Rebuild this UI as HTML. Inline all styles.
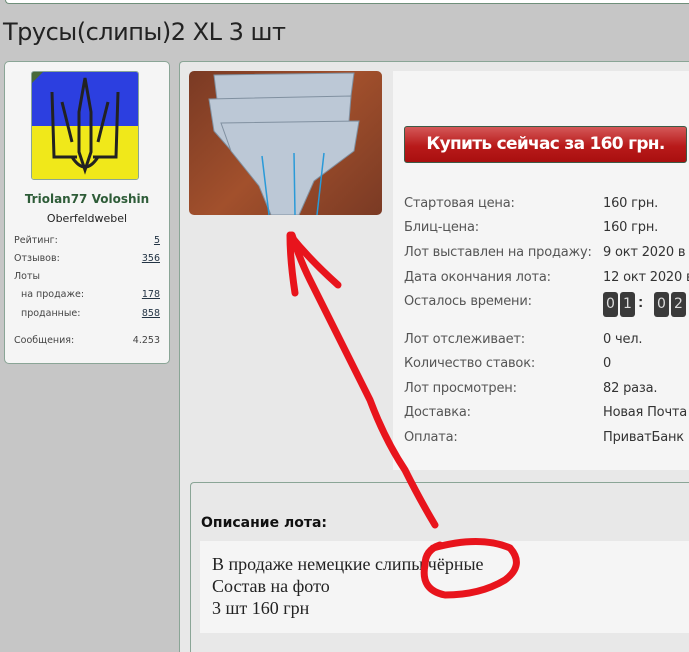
<!DOCTYPE html>
<html><head><meta charset="utf-8"><style>
html,body{margin:0;width:689px;height:652px;overflow:hidden}
body{background:#c6c6c6;font-family:"DejaVu Sans",sans-serif;position:relative}
.abs{position:absolute}
.topbar{left:5px;top:0;width:684px;height:3px;background:#fff;border:1px solid #6f8f7a;border-top:none;border-right:none;border-radius:0 0 0 4px}
h1{position:absolute;left:3px;top:18px;margin:0;font:400 24px "DejaVu Sans",sans-serif;color:#222;letter-spacing:-0.5px}
.user{left:4px;top:61px;width:164px;height:301px;background:#f5f5f5;border:1px solid #8aa596;border-radius:5px}
.main{left:179px;top:61px;width:510px;height:591px;background:#e8e8e8;border-left:1px solid #8aa596;border-top:1px solid #8aa596;border-radius:4px 0 0 0;box-sizing:border-box}
.st{font-size:9.5px;color:#444}
.st a{color:#234;text-decoration:underline}
.info{left:393px;top:71px;width:296px;height:399px;background:#f5f5f5}
.row{position:absolute;left:404px;font-size:13px;color:#555;letter-spacing:-0.2px}
.val{position:absolute;left:603px;font-size:13px;color:#333;white-space:nowrap;letter-spacing:-0.2px}
.btn{left:404px;top:126px;width:281px;height:35px;border:1px solid #3c5a46;border-radius:3px;background:linear-gradient(#d45858,#b81a1a 55%,#a90f0f);color:#fff;font:bold 17px "DejaVu Sans",sans-serif;text-align:center;line-height:35px;letter-spacing:-0.7px}
.dig{position:absolute;top:292px;width:15px;height:25px;background:#3a3a3a;border-radius:3px;color:#ddd;font-size:14px;text-align:center;line-height:25px}
.desc{left:190px;top:482px;width:499px;height:170px;border-left:1px solid #8aa596;border-top:1px solid #8aa596;border-radius:4px 0 0 0;background:#e8e8e8;box-sizing:border-box}
.dbox{left:200px;top:541px;width:489px;height:92px;background:#f5f5f5}
.dtext{left:212px;top:553px;font:18px/22px "Liberation Serif",serif;color:#222;white-space:nowrap}
</style></head><body>
<div class="abs topbar"></div>
<h1>Трусы(слипы)2 XL 3 шт</h1>
<div class="abs user">
 <div class="abs" style="left:26px;top:9px;width:106px;height:107px;border:1px solid #8aa596;border-radius:3px;overflow:hidden">
  <div style="height:54px;background:#2c3fe0"></div><div style="height:53px;background:#f0e81a"></div>
  <svg class="abs" style="left:0;top:0" width="106" height="107" viewBox="0 0 106 107"><g fill="none" stroke="#222" stroke-width="3"><path d="M53 6 L47 40 L47 80 L53 98 L59 80 L59 40Z"/><path d="M20 20 L22 85 L45 85 M86 20 L84 85 L61 85"/><path d="M30 30 L40 70 M76 30 L66 70"/><path d="M40 85 Q53 105 66 85"/></g></svg>
  <div class="abs" style="left:0;top:0;width:0;height:0;border-top:11px solid #4a6a3a;border-right:11px solid transparent"></div>
 </div>
 <div class="abs" style="left:0;width:164px;top:130px;text-align:center;font:bold 12px 'DejaVu Sans',sans-serif;color:#2e5c38">Triolan77 Voloshin</div>
 <div class="abs" style="left:0;width:164px;top:150px;text-align:center;font-size:11px;color:#222">Oberfeldwebel</div>
 <div class="abs st" style="left:9px;top:173px">Рейтинг:</div><div class="abs st" style="right:9px;top:173px"><a>5</a></div>
 <div class="abs st" style="left:9px;top:191px">Отзывов:</div><div class="abs st" style="right:9px;top:191px"><a>356</a></div>
 <div class="abs st" style="left:9px;top:209px">Лоты</div>
 <div class="abs st" style="left:16px;top:227px">на продаже:</div><div class="abs st" style="right:9px;top:227px"><a>178</a></div>
 <div class="abs st" style="left:16px;top:246px">проданные:</div><div class="abs st" style="right:9px;top:246px"><a>858</a></div>
 <div class="abs st" style="left:9px;top:273px">Сообщения:</div><div class="abs st" style="right:9px;top:273px">4.253</div>
</div>
<div class="abs main"></div>
<div class="abs" style="left:189px;top:71px;width:193px;height:144px;border-radius:5px;overflow:hidden;background:linear-gradient(135deg,#7a3a24,#a2502c 50%,#7a3a24)">
 <svg width="193" height="144"><g fill="#bcc8d6" stroke="#8090a0"><path d="M25 4 L165 2 L160 40 L30 45Z"/><path d="M20 28 L162 25 L158 75 L130 100 L60 100 L25 60Z"/><path d="M32 52 L170 50 L165 80 L125 110 L110 144 L82 144 L70 115 L42 80Z"/></g><g stroke="#2a9ad8" stroke-width="1.5" fill="none"><path d="M73 85 L80 144 M105 82 L106 144 M135 82 L128 144"/></g></svg>
</div>
<div class="abs info"></div>
<div class="abs btn">Купить сейчас за 160 грн.</div>
<div class="row" style="top:196px">Стартовая цена:</div><div class="val" style="top:196px">160 грн.</div>
<div class="row" style="top:220px">Блиц-цена:</div><div class="val" style="top:220px">160 грн.</div>
<div class="row" style="top:245px">Лот выставлен на продажу:</div><div class="val" style="top:245px">9 окт 2020 в</div>
<div class="row" style="top:270px">Дата окончания лота:</div><div class="val" style="top:270px">12 окт 2020 в</div>
<div class="row" style="top:294px">Осталось времени:</div>
<div class="dig" style="left:603px">0</div><div class="dig" style="left:620px">1</div>
<div class="abs" style="left:638px;top:294px;font:bold 16px sans-serif;color:#333">:</div>
<div class="dig" style="left:654px">0</div><div class="dig" style="left:671px">2</div>
<div class="row" style="top:332px">Лот отслеживает:</div><div class="val" style="top:332px">0 чел.</div>
<div class="row" style="top:356px">Количество ставок:</div><div class="val" style="top:356px">0</div>
<div class="row" style="top:381px">Лот просмотрен:</div><div class="val" style="top:381px">82 раза.</div>
<div class="row" style="top:405px">Доставка:</div><div class="val" style="top:405px">Новая Почта</div>
<div class="row" style="top:430px">Оплата:</div><div class="val" style="top:430px">ПриватБанк</div>
<div class="abs desc"></div>
<div class="abs" style="left:201px;top:515px;font:bold 14px 'DejaVu Sans',sans-serif;color:#111">Описание лота:</div>
<div class="abs dbox"></div>
<div class="abs dtext">В продаже немецкие слипы чёрные<br>Состав на фото<br>3 шт 160 грн</div>
<svg class="abs" style="left:0;top:0" width="689" height="652"><g fill="none" stroke="#e8141c" stroke-width="7" stroke-linecap="round" stroke-linejoin="round">
<path d="M435 525 Q420 500 405 470 Q385 440 370 400 Q350 360 335 330 Q320 300 310 280 Q300 260 292 235"/>
<path d="M295 293 Q290 260 290 235 Q310 260 338 285"/>
<path d="M433 548 Q480 535 510 548 Q525 565 505 580 Q480 595 445 595 Q420 590 425 565 Q425 550 440 545"/>
</g></svg>
</body></html>
